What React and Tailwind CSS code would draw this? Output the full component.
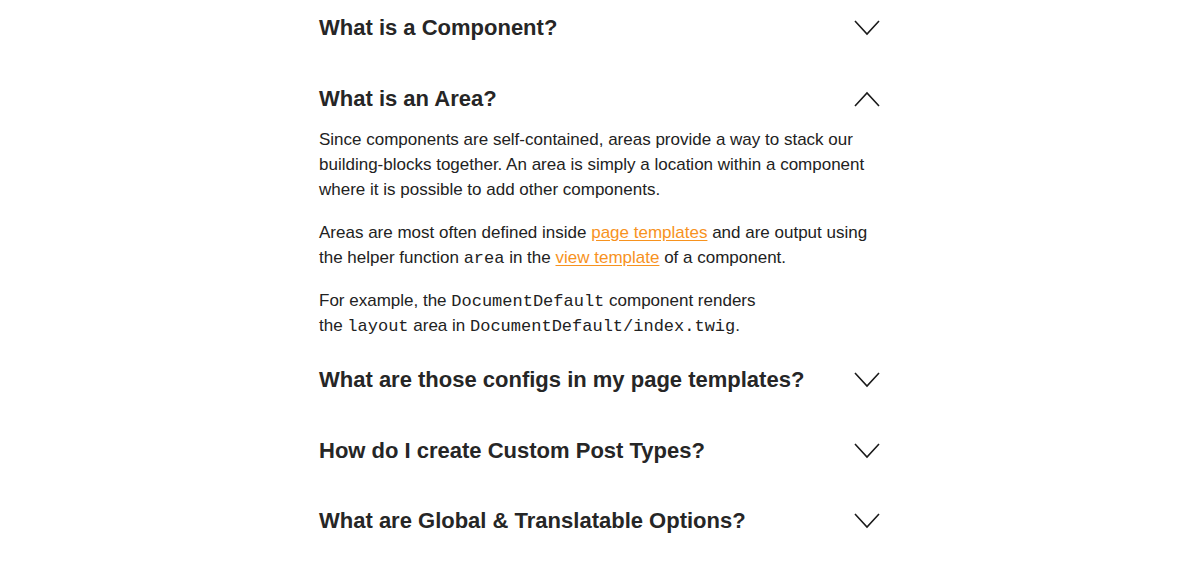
import { useState } from 'react';

const faqs = [
  { id: 'component', title: 'What is a Component?' },
  { id: 'area', title: 'What is an Area?' },
  { id: 'configs', title: 'What are those configs in my page templates?' },
  { id: 'cpt', title: 'How do I create Custom Post Types?' },
  { id: 'options', title: 'What are Global & Translatable Options?' },
];

function Chevron({ open }) {
  return (
    <svg width="26" height="16" viewBox="0 0 26 16" fill="none" className="shrink-0 mr-[1px]">
      {open ? (
        <polyline points="1,15 13,2 25,15" stroke="#1a1a1a" strokeWidth="1.6" />
      ) : (
        <polyline points="1,1 13,14 25,1" stroke="#1a1a1a" strokeWidth="1.6" />
      )}
    </svg>
  );
}

const Code = ({ children }) => (
  <code className="font-['Liberation_Mono',monospace] text-[17px] leading-none">{children}</code>
);

const Link = ({ children }) => (
  <a href="#" className="text-[#f7921e] underline underline-offset-2">{children}</a>
);

function AreaContent() {
  return (
    <div className="-mt-[7px] pb-[7px] space-y-[18px] text-[17px] leading-[25px] text-[#222]">
      <p>
        Since components are self-contained, areas provide a way to stack our building-blocks together. An area is
        simply a location within a component where it is possible to add other components.
      </p>
      <p>
        Areas are most often defined inside <Link>page templates</Link> and are output using the helper function{' '}
        <Code>area</Code> in the <Link>view template</Link> of a component.
      </p>
      <p>
        For example, the <Code>DocumentDefault</Code> component renders
        <br />
        the <Code>layout</Code> area in <Code>DocumentDefault/index.twig</Code>.
      </p>
    </div>
  );
}

export default function App() {
  const [openId, setOpenId] = useState('area');

  return (
    <div className="min-h-screen bg-white font-['Liberation_Sans',Arial,sans-serif] overflow-hidden">
      <div className="mx-auto w-[562px] -mt-[7px]">
        {faqs.map(faq => {
          const isOpen = faq.id === openId;
          return (
            <div key={faq.id}>
              <button
                className="w-full flex items-center justify-between py-[21px] text-left"
                onClick={() => setOpenId(isOpen ? null : faq.id)}
              >
                <h3 className="text-[22px] leading-[28.5px] font-bold text-[#262626]">{faq.title}</h3>
                <Chevron open={isOpen} />
              </button>
              {isOpen && faq.id === 'area' && <AreaContent />}
            </div>
          );
        })}
      </div>
    </div>
  );
}
